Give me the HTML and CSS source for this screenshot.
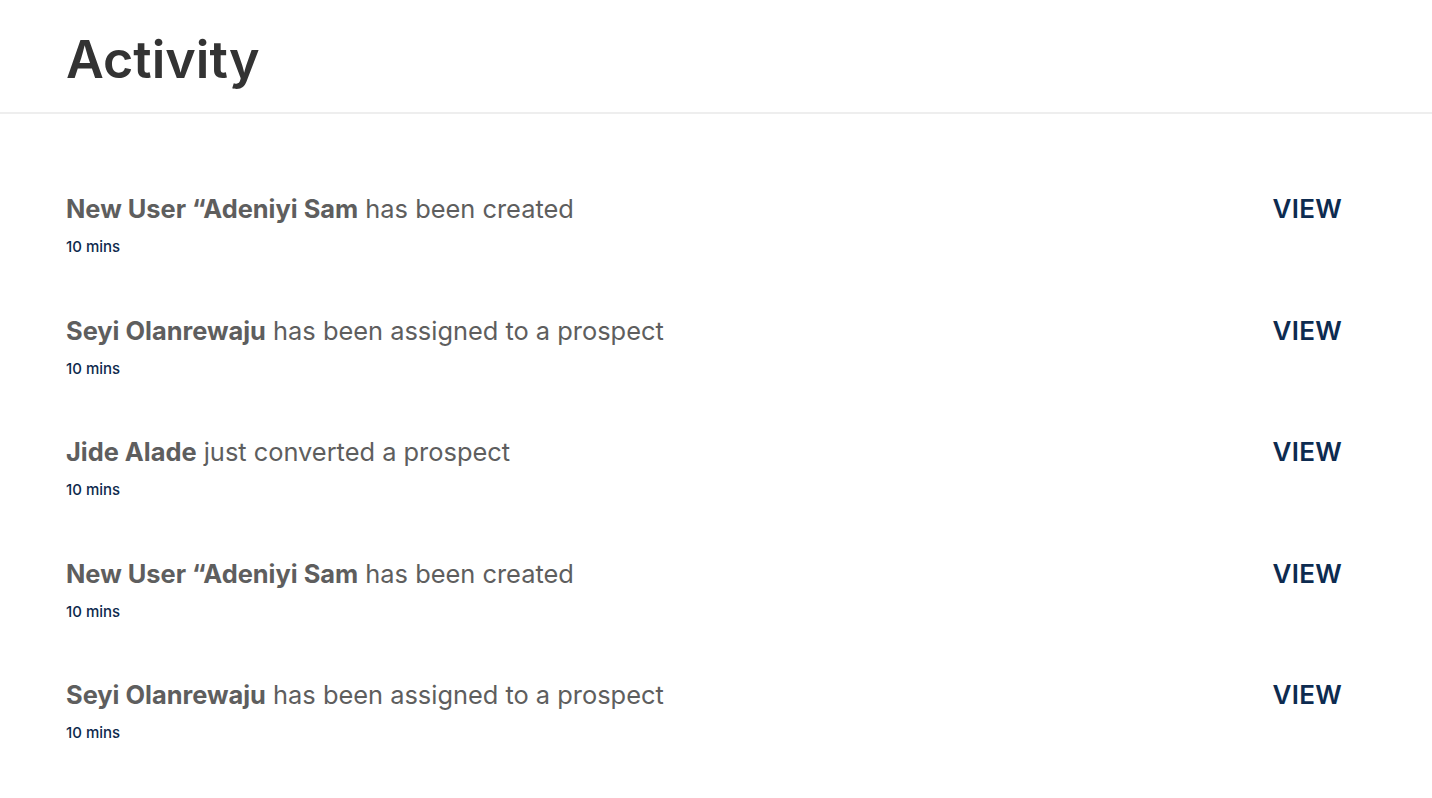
FILE: index.html
```html
<!DOCTYPE html>
<html>
<head>
<meta charset="utf-8">
<link rel="stylesheet" href="styles.css">
</head>
<body>
<header class="header"><h1 class="title">Activity</h1></header>
<main class="list">
  <div class="item">
    <div class="info">
      <div class="text"><b>New User “Adeniyi Sam</b> has been created</div>
      <div class="time">10 mins</div>
    </div>
    <a class="view">VIEW</a>
  </div>
  <div class="item">
    <div class="info">
      <div class="text"><b>Seyi Olanrewaju</b> has been assigned to a prospect</div>
      <div class="time">10 mins</div>
    </div>
    <a class="view">VIEW</a>
  </div>
  <div class="item">
    <div class="info">
      <div class="text"><b>Jide Alade</b> just converted a prospect</div>
      <div class="time">10 mins</div>
    </div>
    <a class="view">VIEW</a>
  </div>
  <div class="item">
    <div class="info">
      <div class="text"><b>New User “Adeniyi Sam</b> has been created</div>
      <div class="time">10 mins</div>
    </div>
    <a class="view">VIEW</a>
  </div>
  <div class="item">
    <div class="info">
      <div class="text"><b>Seyi Olanrewaju</b> has been assigned to a prospect</div>
      <div class="time">10 mins</div>
    </div>
    <a class="view">VIEW</a>
  </div>
</main>
</body>
</html>
```
FILE: styles.css
```css
html, body { margin: 0; padding: 0; background: #fff; }
body { font-family: Inter, "Noto Sans", sans-serif; }
.header {
  height: 114px;
  border-bottom: 2px solid #eeeeee;
  padding: 28px 0 0 66px;
  box-sizing: border-box;
}
.title {
  margin: 0;
  font-size: 52px;
  line-height: 64px;
  font-weight: 600;
  color: #333333;
}
.list {
  padding: 79px 90px 0 66px;
  display: flex;
  flex-direction: column;
}
.item {
  height: 121.5px;
  display: flex;
  justify-content: space-between;
  align-items: flex-start;
}
.text {
  font-size: 25.4px;
  line-height: 32px;
  color: #5e5e5e;
}
.text b { font-weight: 700; }
.time {
  margin-top: 13px;
  font-size: 15px;
  line-height: 18px;
  font-weight: 500;
  color: #0e2a4d;
}
.view {
  font-size: 26px;
  line-height: 32px;
  font-weight: 600;
  color: #0d2b50;
  letter-spacing: 0.3px;
}
```
